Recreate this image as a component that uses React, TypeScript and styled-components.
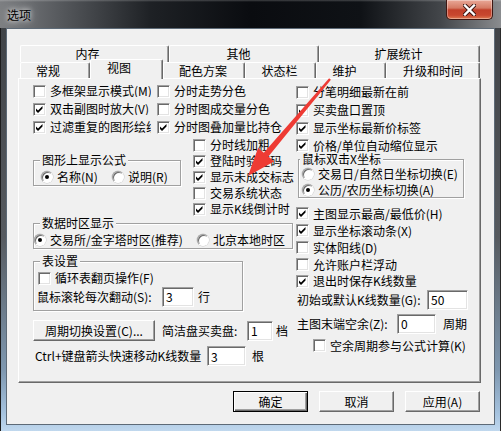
import React from "react";
import styled, { createGlobalStyle, css } from "styled-components";

const GlobalStyle = createGlobalStyle`
  html, body {
    margin: 0;
    padding: 0;
    background: #1b1e22;
  }
  body {
    font-family: "Noto Sans CJK SC", "DejaVu Sans", sans-serif;
    font-size: 12px;
    color: #000;
  }
  * {
    box-sizing: border-box;
  }
`;

const Window = styled.div`
  position: relative;
  width: 501px;
  height: 431px;
  display: flex;
  flex-direction: column;
  overflow: hidden;
  background: linear-gradient(180deg, #3d4044 0%, #565a5f 55%, #7f98b0 86%, #a6c3df 96%, #c0d8ee 100%);
  box-shadow: inset 1px 0 0 #1c1c1c, inset -1px 0 0 #2a2a2a;
`;

const TitleBar = styled.div`
  height: 28px;
  flex: none;
  display: flex;
  justify-content: space-between;
  align-items: flex-start;
  padding: 0 8px 0 7px;
  background:
    linear-gradient(180deg, rgba(255, 255, 255, 0.22) 0, rgba(255, 255, 255, 0) 2px),
    linear-gradient(90deg, #7d7f82 0%, #56595d 12%, #1e2125 30%, #0a0c10 50%, #0f1216 72%, #43464a 88%, #8a8c8f 100%);
`;

const TitleText = styled.span`
  padding-top: 1px;
  line-height: 28px;
  font-size: 12px;
  color: #000;
  text-shadow: 0 0 5px rgba(255, 255, 255, 0.95), 0 0 10px rgba(255, 255, 255, 0.7);
`;

const CloseButton = styled.div`
  width: 47px;
  height: 20px;
  display: flex;
  align-items: center;
  justify-content: center;
  border: 1px solid #3e1712;
  border-top: none;
  border-radius: 0 0 5px 5px;
  background: linear-gradient(180deg, #e9a898 0%, #d57a64 42%, #c2402a 52%, #c8472f 80%, #de7a52 100%);
  box-shadow: inset 0 0 0 1px rgba(255, 255, 255, 0.35);
`;

const FrameBody = styled.div`
  flex: 1;
  display: flex;
  padding: 0 6px 6px 6px;
`;

const Client = styled.div`
  flex: 1;
  display: flex;
  flex-direction: column;
  background: #f0f0f0;
  border: 1px solid #5d6a77;
  padding: 16px 13px 0 11px;
`;

const TabControl = styled.div`
  display: flex;
  flex-direction: column;
  width: 463px;
`;

const TabRow = styled.div<{ $h: number }>`
  display: flex;
  align-items: stretch;
  height: ${(p) => p.$h}px;
  margin-left: 2px;
  width: 460px;
`;

const Tab = styled.div<{ $w: number; $pr: number; $active?: boolean }>`
  width: ${(p) => p.$w}px;
  flex: none;
  display: flex;
  align-items: center;
  justify-content: center;
  padding-right: ${(p) => p.$pr}px;
  background: #f0f0f0;
  border-top: 1px solid #fff;
  border-left: 1px solid #fff;
  border-right: 1px solid #696969;
  border-radius: 2px 2px 0 0;
  box-shadow: inset -1px 0 0 #a0a0a0;
  line-height: 14px;
  white-space: nowrap;
  ${(p) =>
    p.$active &&
    css`
      position: relative;
      z-index: 1;
      margin-top: -3px;
      margin-bottom: -1px;
      padding-bottom: 3px;
    `}
`;

const Panel = styled.div`
  height: 305px;
  display: flex;
  padding: 3px 0 0 14px;
  border-top: 1px solid #fff;
  border-left: 1px solid #fff;
  border-right: 1px solid #696969;
  border-bottom: 1px solid #696969;
  box-shadow: inset -1px -1px 0 #a0a0a0;
`;

const LeftArea = styled.div`
  width: 263px;
  flex: none;
  display: flex;
  flex-direction: column;
`;

const TopGrid = styled.div`
  display: grid;
  grid-template-columns: 124px 139px;
  grid-auto-rows: 18px;
`;

const MidRow = styled.div`
  display: flex;
  align-items: flex-start;
`;

const SubCol = styled.div`
  display: flex;
  flex-direction: column;
  margin: 1px 0 0 12px;
`;

const RightCol = styled.div`
  display: flex;
  flex-direction: column;
  padding-top: 1px;
`;

const CheckRow = styled.div<{ $h: number; $indent?: number; $mt?: number }>`
  display: flex;
  align-items: center;
  gap: 4px;
  height: ${(p) => p.$h}px;
  padding-left: ${(p) => p.$indent ?? 0}px;
  margin-top: ${(p) => p.$mt ?? 0}px;
  white-space: nowrap;
`;

const Box = styled.span`
  width: 13px;
  height: 13px;
  flex: none;
  display: inline-flex;
  background: #fff;
  border: 1px solid;
  border-color: #a0a0a0 #fff #fff #a0a0a0;
  box-shadow: inset 1px 1px 0 #696969, inset -1px -1px 0 #e3e3e3;
`;

const RadioDot = styled.span<{ $on?: boolean }>`
  width: 12px;
  height: 12px;
  flex: none;
  display: inline-flex;
  align-items: center;
  justify-content: center;
  border-radius: 50%;
  background: #fff;
  border: 1px solid;
  border-color: #a0a0a0 #fff #fff #a0a0a0;
  box-shadow: inset 1px 1px 0 #696969, 0 0 0 0.5px #c8c8c8;

  &::after {
    content: "";
    width: 4px;
    height: 4px;
    border-radius: 50%;
    background: ${(p) => (p.$on ? "#000" : "transparent")};
  }
`;

const Label = styled.span<{ $clip?: number; $w?: number }>`
  line-height: 12px;
  white-space: nowrap;
  flex: none;
  ${(p) =>
    p.$clip &&
    css`
      max-width: ${p.$clip}px;
      overflow: hidden;
    `}
  ${(p) =>
    p.$w &&
    css`
      width: ${p.$w}px;
    `}
`;

const RadioRow = styled.div<{ $h: number; $indent?: number; $mt?: number }>`
  display: flex;
  align-items: center;
  height: ${(p) => p.$h}px;
  padding-left: ${(p) => p.$indent ?? 0}px;
  margin-top: ${(p) => p.$mt ?? 0}px;
`;

const RadioItem = styled.span<{ $w?: number }>`
  display: inline-flex;
  align-items: center;
  gap: 4px;
  white-space: nowrap;
  ${(p) =>
    p.$w &&
    css`
      width: ${p.$w}px;
    `}
`;

const GroupBox = styled.div<{ $w: number; $mt: number; $ml?: number; $pb?: number }>`
  width: ${(p) => p.$w}px;
  flex: none;
  display: flex;
  flex-direction: column;
  margin-top: ${(p) => p.$mt}px;
  margin-left: ${(p) => p.$ml ?? 0}px;
  padding-bottom: ${(p) => p.$pb ?? 0}px;
  border: 1px solid #a0a0a0;
  box-shadow: inset 1px 1px 0 #fff, 1px 1px 0 #fff;
`;

const GroupTitle = styled.span<{ $ml: number }>`
  align-self: flex-start;
  margin: -7px 0 0 ${(p) => p.$ml}px;
  padding: 0 2px;
  line-height: 12px;
  background: #f0f0f0;
  white-space: nowrap;
`;

const FieldRow = styled.div<{ $h: number; $mt?: number; $indent?: number }>`
  display: flex;
  align-items: center;
  height: ${(p) => p.$h}px;
  margin-top: ${(p) => p.$mt ?? 0}px;
  padding-left: ${(p) => p.$indent ?? 0}px;
  white-space: nowrap;
`;

const Field = styled.input<{ $w: number }>`
  width: ${(p) => p.$w}px;
  height: 20px;
  flex: none;
  margin: 0;
  padding: 0 3px;
  font: inherit;
  font-size: 12px;
  color: #000;
  background: #fff;
  border: 1px solid;
  border-color: #a0a0a0 #fff #fff #a0a0a0;
  box-shadow: inset 1px 1px 0 #696969, inset -1px -1px 0 #e3e3e3;
  outline: none;
`;

const Unit = styled.span<{ $ml: number }>`
  margin-left: ${(p) => p.$ml}px;
  line-height: 12px;
`;

const PushButton = styled.button<{ $w: number; $default?: boolean }>`
  width: ${(p) => p.$w}px;
  height: 21px;
  flex: none;
  padding: 0;
  font: inherit;
  font-size: 12px;
  color: #000;
  background: #f0f0f0;
  border: 1px solid;
  border-color: #fff #696969 #696969 #fff;
  box-shadow: inset -1px -1px 0 #a0a0a0;
  ${(p) =>
    p.$default &&
    css`
      border-color: #000;
      box-shadow: inset 1px 1px 0 #fff, inset -1px -1px 0 #696969, inset -2px -2px 0 #a0a0a0;
    `}
`;

const ButtonRow = styled.div`
  display: flex;
  justify-content: flex-end;
  gap: 11px;
  margin-top: 8px;
  padding-right: 1px;
`;

const ArrowLayer = styled.svg`
  position: absolute;
  left: 0;
  top: 0;
  pointer-events: none;
`;

const CheckMark = () => (
  <svg width="11" height="11" viewBox="0 0 11 11">
    <polygon points="2,4.5 4,6.5 8.5,2 8.5,4.5 4,9 2,7" fill="#000" />
  </svg>
);

const Check = ({
  label,
  on,
  h = 18,
  indent,
  mt,
  clip,
}: {
  label: string;
  on?: boolean;
  h?: number;
  indent?: number;
  mt?: number;
  clip?: number;
}) => (
  <CheckRow $h={h} $indent={indent} $mt={mt}>
    <Box>{on && <CheckMark />}</Box>
    <Label $clip={clip}>{label}</Label>
  </CheckRow>
);

const Radio = ({ label, on, w }: { label: string; on?: boolean; w?: number }) => (
  <RadioItem $w={w}>
    <RadioDot $on={on} />
    <Label>{label}</Label>
  </RadioItem>
);

const topTabs = [
  { label: "内存", w: 149, pr: 14 },
  { label: "其他", w: 150, pr: 11 },
  { label: "扩展统计", w: 161, pr: 2 },
];

const frontTabs = [
  { label: "常规", w: 70, pr: 14 },
  { label: "视图", w: 73, pr: 15, active: true },
  { label: "配色方案", w: 82, pr: 2 },
  { label: "状态栏", w: 71, pr: 2 },
  { label: "维护", w: 70, pr: 13 },
  { label: "升级和时间", w: 94, pr: 0 },
];

export default function App() {
  return (
    <>
      <GlobalStyle />
      <Window>
        <TitleBar>
          <TitleText>选项</TitleText>
          <CloseButton>
            <svg width="13" height="12" viewBox="0 0 13 12">
              <path
                d="M2 1.5 L11 10.5 M11 1.5 L2 10.5"
                stroke="#3a1410"
                strokeWidth="4.2"
                strokeLinecap="square"
              />
              <path
                d="M2 1.5 L11 10.5 M11 1.5 L2 10.5"
                stroke="#fff"
                strokeWidth="2.4"
                strokeLinecap="square"
              />
            </svg>
          </CloseButton>
        </TitleBar>
        <FrameBody>
          <Client>
            <TabControl>
              <TabRow $h={17}>
                {topTabs.map((t) => (
                  <Tab key={t.label} $w={t.w} $pr={t.pr}>
                    {t.label}
                  </Tab>
                ))}
              </TabRow>
              <TabRow $h={16}>
                {frontTabs.map((t) => (
                  <Tab key={t.label} $w={t.w} $pr={t.pr} $active={t.active}>
                    {t.label}
                  </Tab>
                ))}
              </TabRow>
              <Panel>
                <LeftArea>
                  <TopGrid>
                    <Check label="多框架显示模式(M)" clip={101} />
                    <Check label="分时走势分色" />
                    <Check label="双击副图时放大(V)" on clip={101} />
                    <Check label="分时图成交量分色" />
                    <Check label="过滤重复的图形绘线" on clip={101} />
                    <Check label="分时图叠加量比持仓" on />
                  </TopGrid>
                  <MidRow>
                    <GroupBox $w={148} $mt={24}>
                      <GroupTitle $ml={6}>图形上显示公式</GroupTitle>
                      <RadioRow $h={16} $mt={3} $indent={7}>
                        <Radio label="名称(N)" on w={71} />
                        <Radio label="说明(R)" />
                      </RadioRow>
                    </GroupBox>
                    <SubCol>
                      <Check label="分时线加粗" h={16} />
                      <Check label="登陆时验证码" on h={16} />
                      <Check label="显示未成交标志" on h={16} />
                      <Check label="交易系统状态" h={16} />
                      <Check label="显示K线倒计时" on h={16} />
                    </SubCol>
                  </MidRow>
                  <GroupBox $w={260} $mt={6}>
                    <GroupTitle $ml={6}>数据时区显示</GroupTitle>
                    <RadioRow $h={16} $mt={3}>
                      <Radio label="交易所/金字塔时区(推荐)" on w={163} />
                      <Radio label="北京本地时区" />
                    </RadioRow>
                  </GroupBox>
                  <GroupBox $w={210} $mt={12} $pb={3}>
                    <GroupTitle $ml={6}>表设置</GroupTitle>
                    <Check label="循环表翻页操作(F)" h={16} mt={3} indent={4} />
                    <FieldRow $h={21} $indent={3}>
                      <Label $w={125}>鼠标滚轮每次翻动(S):</Label>
                      <Field $w={32} readOnly value="3" />
                      <Unit $ml={4}>行</Unit>
                    </FieldRow>
                  </GroupBox>
                  <FieldRow $h={21} $mt={9}>
                    <PushButton $w={122}>周期切换设置(C)...</PushButton>
                    <Label $w={85} style={{ marginLeft: 7 }}>
                      简洁盘买卖盘:
                    </Label>
                    <Field $w={26} readOnly value="1" />
                    <Unit $ml={3}>档</Unit>
                  </FieldRow>
                  <FieldRow $h={20} $mt={5} $indent={2}>
                    <Label $w={172}>Ctrl+键盘箭头快速移动K线数量</Label>
                    <Field $w={39} readOnly value="3" />
                    <Unit $ml={6}>根</Unit>
                  </FieldRow>
                </LeftArea>
                <RightCol>
                  <Check label="分笔明细最新在前" />
                  <Check label="买卖盘口置顶" on />
                  <Check label="显示坐标最新价标签" on />
                  <Check label="价格/单位自动缩位显示" on h={17} />
                  <GroupBox $w={166} $mt={5} $ml={2}>
                    <GroupTitle $ml={1}>鼠标双击X坐标</GroupTitle>
                    <RadioRow $h={16} $mt={1} $indent={3}>
                      <Radio label="交易日/自然日坐标切换(E)" />
                    </RadioRow>
                    <RadioRow $h={15} $indent={3}>
                      <Radio label="公历/农历坐标切换(A)" on />
                    </RadioRow>
                  </GroupBox>
                  <Check label="主图显示最高/最低价(H)" on h={17} mt={7} />
                  <Check label="显示坐标滚动条(X)" on h={17} />
                  <Check label="实体阳线(D)" h={17} />
                  <Check label="允许账户栏浮动" h={17} />
                  <Check label="退出时保存K线数量" on h={16} />
                  <FieldRow $h={21} $indent={1}>
                    <Label $w={130}>初始或默认K线数量(G):</Label>
                    <Field $w={41} readOnly value="50" />
                  </FieldRow>
                  <FieldRow $h={21} $mt={3} $indent={1}>
                    <Label $w={100}>主图末端空余(Z):</Label>
                    <Field $w={39} readOnly value="0" />
                    <Unit $ml={7}>周期</Unit>
                  </FieldRow>
                  <Check label="空余周期参与公式计算(K)" h={17} mt={3} indent={17} />
                </RightCol>
              </Panel>
            </TabControl>
            <ButtonRow>
              <PushButton $w={75} $default>
                确定
              </PushButton>
              <PushButton $w={75}>取消</PushButton>
              <PushButton $w={75}>应用(A)</PushButton>
            </ButtonRow>
          </Client>
        </FrameBody>
        <ArrowLayer width="501" height="431" viewBox="0 0 501 431">
          <polygon
            points="330.9,79.8 268.4,156.6 274.1,161.4 248,176 258.1,147.8 263.8,152.7 329.1,78.2"
            fill="#ee3b34"
          />
        </ArrowLayer>
      </Window>
    </>
  );
}
